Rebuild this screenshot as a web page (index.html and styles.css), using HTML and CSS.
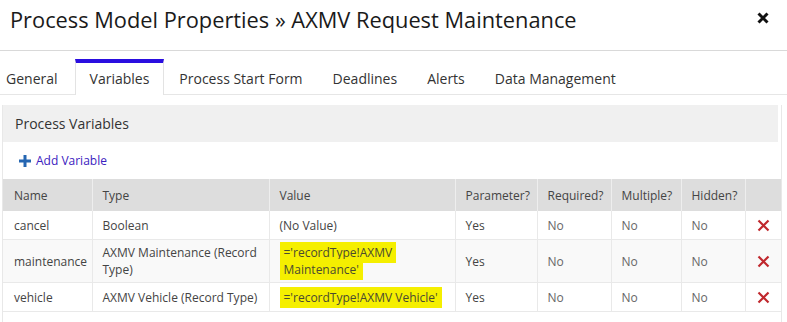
FILE: index.html
```html
<!DOCTYPE html>
<html>
<head>
<meta charset="utf-8">
<link rel="stylesheet" href="styles.css">
</head>
<body>
<div class="dialog">
  <div class="titlebar">
    <h1 class="title">Process Model Properties » AXMV Request Maintenance</h1>
    <svg class="close" width="12" height="12" viewBox="0 0 12 12"><path d="M1.5 1.5 L10.5 10.5 M10.5 1.5 L1.5 10.5" stroke="#111" stroke-width="3" stroke-linecap="butt"/></svg>
  </div>
  <div class="tabs">
    <div class="tab first">General</div>
    <div class="tab active">Variables</div>
    <div class="tab">Process Start Form</div>
    <div class="tab">Deadlines</div>
    <div class="tab">Alerts</div>
    <div class="tab">Data Management</div>
  </div>
  <div class="panel">
    <div class="panel-head">Process Variables</div>
    <div class="add-row">
      <svg class="plus" width="12" height="12" viewBox="0 0 12 12"><path d="M4.5 0 H7.5 V4.5 H12 V7.5 H7.5 V12 H4.5 V7.5 H0 V4.5 H4.5 Z" fill="#2566b2"/></svg>
      <span class="add-link">Add Variable</span>
    </div>
    <table class="vars">
      <colgroup>
        <col class="c-name"><col class="c-type"><col class="c-value"><col class="c-param"><col class="c-req"><col class="c-mult"><col class="c-hid"><col class="c-del">
      </colgroup>
      <thead>
        <tr><th>Name</th><th>Type</th><th>Value</th><th>Parameter?</th><th>Required?</th><th>Multiple?</th><th>Hidden?</th><th></th></tr>
      </thead>
      <tbody>
        <tr><td>cancel</td><td>Boolean</td><td>(No Value)</td><td>Yes</td><td class="no">No</td><td class="no">No</td><td class="no">No</td><td class="del"><svg width="13" height="13" viewBox="0 0 13 13"><path d="M1.5 1.5 L11.5 11.5 M11.5 1.5 L1.5 11.5" stroke="#c0282d" stroke-width="2.2"/></svg></td></tr>
        <tr class="alt"><td>maintenance</td><td>AXMV Maintenance (Record Type)</td><td class="val2"><span class="hl">='recordType!AXMV Maintenance'</span></td><td>Yes</td><td class="no">No</td><td class="no">No</td><td class="no">No</td><td class="del"><svg width="13" height="13" viewBox="0 0 13 13"><path d="M1.5 1.5 L11.5 11.5 M11.5 1.5 L1.5 11.5" stroke="#c0282d" stroke-width="2.2"/></svg></td></tr>
        <tr><td>vehicle</td><td>AXMV Vehicle (Record Type)</td><td><span class="hl">='recordType!AXMV Vehicle'</span></td><td>Yes</td><td class="no">No</td><td class="no">No</td><td class="no">No</td><td class="del"><svg width="13" height="13" viewBox="0 0 13 13"><path d="M1.5 1.5 L11.5 11.5 M11.5 1.5 L1.5 11.5" stroke="#c0282d" stroke-width="2.2"/></svg></td></tr>
      </tbody>
    </table>
    <div class="panel-foot"></div>
  </div>
</div>
</body>
</html>
```
FILE: styles.css
```css
html, body {
  margin: 0;
  padding: 0;
  background: #fff;
}
body {
  font-family: "Open Sans", "DejaVu Sans", sans-serif;
  color: #333;
  overflow: hidden;
}
.titlebar {
  height: 50px;
  border-bottom: 1px solid #d9d9d9;
  display: flex;
  align-items: center;
  justify-content: space-between;
  padding: 0 18px 0 10px;
}
.title {
  margin: 0;
  font-size: 21.8px;
  font-weight: 400;
  color: #1a1a1a;
  line-height: 1;
  padding-bottom: 10px;
}
.close {
  margin-bottom: 14px;
}
.tabs {
  display: flex;
  padding-top: 8px;
  border-bottom: 1px solid #e6e6e6;
}
.tab {
  height: 31px;
  line-height: 31px;
  padding: 3px 14px 0;
  border: 1px solid transparent;
  border-bottom: none;
  font-size: 14px;
  color: #333;
}
.tab.first {
  padding-left: 5px;
  padding-right: 16px;
}
.tab.active {
  border-color: #e3e3e3;
  border-top: 4px solid #2a0ee0;
  padding-top: 0;
  margin-bottom: -1px;
  background: #fff;
  height: 32px;
}
.panel {
  margin: 10px 5px 0 2px;
  border-left: 1px solid #e8e8e8;
  border-right: 1px solid #e8e8e8;
}
.panel-head {
  background: #f0f0f0;
  height: 37px;
  line-height: 37px;
  padding-left: 12px;
  margin-right: 3px;
  font-size: 14px;
  color: #333;
}
.add-row {
  height: 37px;
  display: flex;
  align-items: center;
  padding-left: 16px;
}
.plus {
  margin-right: 5px;
}
.add-link {
  font-size: 12px;
  color: #3b22c0;
}
.vars {
  width: 100%;
  border-collapse: collapse;
  table-layout: fixed;
  font-size: 12px;
}
.c-name { width: 89px; }
.c-type { width: 177px; }
.c-value { width: 186px; }
.c-param { width: 82px; }
.c-req { width: 74px; }
.c-mult { width: 70px; }
.c-hid { width: 64px; }
.c-del { width: auto; }
.vars th {
  background: #dddddd;
  height: 32px;
  padding: 0 10px;
  text-align: left;
  font-weight: 400;
  color: #444;
  border-left: 1px solid #eeeeee;
}
.vars th:first-child {
  padding-left: 11px;
  border-left: none;
}
.vars td {
  height: 28px;
  padding: 0 10px;
  border-left: 1px solid #e9e9e9;
  border-bottom: 1px solid #e9e9e9;
  color: #444;
  line-height: 17px;
}
.vars td:first-child {
  padding-left: 11px;
  border-left: none;
}
.vars tr.alt td {
  background: #f9f9f9;
  height: 42px;
}
.vars td.no {
  color: #666;
}
.vars td.del {
  text-align: center;
  padding: 0;
}
.vars td.del svg {
  display: block;
  margin: 0 auto;
}
.hl {
  background: #f5ef00;
  padding: 2px 4px;
  -webkit-box-decoration-break: clone;
  box-decoration-break: clone;
  color: #4a4a30;
}
.panel-foot {
  height: 20px;
}
```
